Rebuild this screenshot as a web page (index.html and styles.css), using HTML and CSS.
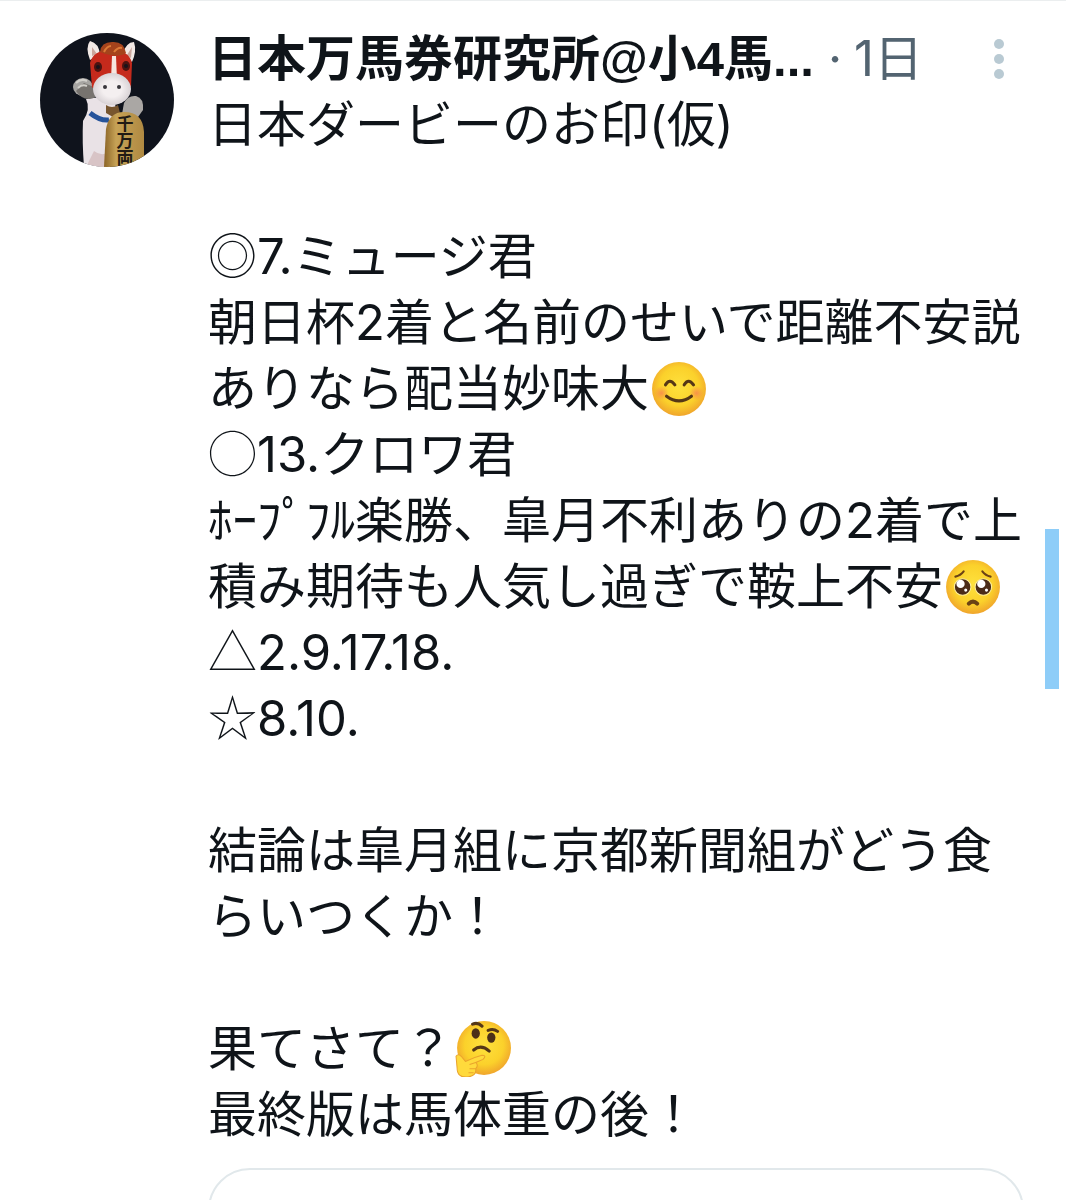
FILE: index.html
```
<!DOCTYPE html>
<html lang="ja">
<head>
<meta charset="UTF-8" />
<meta name="viewport" content="width=device-width, initial-scale=1" />
<title>日本万馬券研究所</title>
<link rel="stylesheet" href="styles.css">
</head>
<body>

<article class="tweet">
  <svg class="avatar" viewBox="0 0 134 134" role="img" aria-label="馬の置物">
    <defs>
      <clipPath id="round"><circle cx="67" cy="67" r="67" /></clipPath>
      <linearGradient id="koban" x1="0" x2="1"><stop offset="0" stop-color="#8b6426" /><stop offset=".3" stop-color="#c6a256" /><stop offset="1" stop-color="#b08a42" /></linearGradient>
      <radialGradient id="fur"><stop offset=".5" stop-color="#f4eff0" /><stop offset="1" stop-color="#d8d2d5" /></radialGradient>
    </defs>
    <g clip-path="url(#round)">
      <rect width="134" height="134" fill="#0f131c" />
      <path d="M48 66Q58 62 75 70L78 92 68 134H44Q42 108 43 88Q51 76 46 66Z" fill="#e9e2e6" />
      <path d="M54 118q6 5 14 2l2 14H46z" fill="#d8c4c6" />
      <ellipse cx="43" cy="54" rx="10" ry="9" fill="#a7a5a2" />
      <path d="M36 58Q44 70 56 64L54 54 44 50Z" fill="#77736f" />
      <path d="M36 50q5-5 11-2M38 55q4-4 9-2" stroke="#d2d0cb" stroke-width="2" fill="none" />
      <path d="M84 70q4-8 12-7 8 2 7 14l-5 7-16-3z" fill="#aaa7a4" />
      <path d="M50 80q10 8 19 7" stroke="#27549b" stroke-width="5" fill="none" />
      <path d="M50 27Q45 14 50 8Q59 10 60 22Z M82 22Q86 9 94 9Q97 18 92 29Z" fill="#f2e9e5" />
      <path d="M52 23 52 14 57 21Z M87 22 92 14 91 25Z" fill="#cba79d" />
      <path d="M50 30Q53 17 71 17Q89 17 92 30L91 54Q82 63 71 62Q56 61 52 54Z" fill="#c52a1c" />
      <path d="M60 19Q61 9 72 9Q84 8 86 20Q78 26 60 19Z" fill="#a5431c" />
      <path d="M64 19q3-6 7-6M74 19q4-5 8-4" stroke="#dc7a37" stroke-width="2" fill="none" />
      <path d="M72 23h4l1 24h-6z" fill="#f6e5df" />
      <ellipse cx="58" cy="34" rx="4" ry="5" fill="#4d1310" />
      <ellipse cx="86" cy="33" rx="4" ry="5" fill="#4d1310" />
      <circle cx="58" cy="34" r="2" fill="#17131a" />
      <circle cx="86" cy="33" r="2" fill="#17131a" />
      <ellipse cx="72" cy="56" rx="19" ry="16" fill="url(#fur)" />
      <circle cx="65" cy="54" r="2" fill="#38363c" />
      <circle cx="79" cy="54" r="2" fill="#38363c" />
      <path d="M66 72q6 4 12 0l2 8-7 4-7-4z" fill="#77552e" />
      <path d="M66 96Q69 79 84 79Q103 79 104 99V134H64Z" fill="url(#koban)" />
      <text class="avatar-text" x="85" y="82">千万両</text>
    </g>
  </svg>

  <div class="tweet-main">
    <header class="tweet-header">
      <span class="name">日本万馬券研究所@小4馬...</span>
      <span class="dot">·</span>
      <time class="time">1日</time>
      <button class="more" aria-label="その他">
        <svg viewBox="0 0 10 40"><circle cx="5" cy="5" r="5" /><circle cx="5" cy="20" r="5" /><circle cx="5" cy="35" r="5" /></svg>
      </button>
    </header>

    <div class="tweet-text">
      <p>日本ダービーのお印(仮)</p>
      <p>
        <span class="mark">◎</span>7.ミュージ君<br>
        朝日杯2着と名前のせいで距離不安説ありなら配当妙味大<svg class="emoji" viewBox="0 0 54 54" role="img" aria-label="笑顔">
          <defs>
            <radialGradient id="face" cx=".5" cy=".45" r=".55"><stop offset="0" stop-color="#fee13d" /><stop offset=".65" stop-color="#fbd12b" /><stop offset="1" stop-color="#f0a52c" /></radialGradient>
            <radialGradient id="blush"><stop offset="0" stop-color="#f78350" stop-opacity=".8" /><stop offset="1" stop-color="#f78350" stop-opacity="0" /></radialGradient>
          </defs>
          <circle cx="27" cy="27" r="26" fill="url(#face)" />
          <circle cx="10" cy="31" r="7" fill="url(#blush)" />
          <circle cx="44" cy="31" r="7" fill="url(#blush)" />
          <g fill="none" stroke="#553716" stroke-width="3" stroke-linecap="round">
            <path d="M14 23q4-7 9 0M32 23q4-7 9 0" />
            <path d="M15 34q12 9 24 0" />
          </g>
        </svg><br>
        <span class="mark">◯</span>13.クロワ君<br>
        ﾎｰﾌﾟﾌﾙ楽勝、皐月不利ありの2着で上積み期待も人気し過ぎで鞍上不安<svg class="emoji" viewBox="0 0 54 54" role="img" aria-label="うるうる">
          <circle cx="27" cy="27" r="26" fill="url(#face)" />
          <g fill="#4b2c18" stroke="#fff0a0">
            <circle cx="17" cy="27" r="8" />
            <circle cx="37" cy="27" r="8" />
          </g>
          <g fill="#fff">
            <circle cx="15" cy="24" r="4" /><circle cx="35" cy="24" r="4" />
            <circle cx="20" cy="30" r="1.5" /><circle cx="40" cy="30" r="1.5" />
          </g>
          <g fill="none" stroke="#6b4215" stroke-width="2" stroke-linecap="round">
            <path d="M10 17q5-1 8-5M44 17q-5-1-8-5" />
            <path d="M23 43q4-4 8 0" stroke-width="4" />
          </g>
        </svg><br>
        <span class="mark">△</span>2.9.17.18.<br>
        <span class="mark">☆</span>8.10.
      </p>
      <p>結論は皐月組に京都新聞組がどう食らいつくか！</p>
      <p>
        果てさて？<svg class="emoji" viewBox="0 0 54 54" role="img" aria-label="考える顔">
          <circle cx="28" cy="26" r="26" fill="url(#face)" />
          <g fill="#4b3018"><ellipse cx="20" cy="12" rx="4" ry="5" /><ellipse cx="35" cy="16" rx="4" ry="5" /></g>
          <g fill="none" stroke="#553716" stroke-width="3" stroke-linecap="round">
            <path d="M17 3q5-2 9 2M32 9q5-2 9 1" />
            <path d="M18 28q7-6 15 1" />
          </g>
          <path d="M1 34Q3 31 6 34L10 39Q18 35 26 33Q31 33 27 37L20 40Q23 43 20 46Q21 53 12 54Q2 55 2 45Z" fill="#ffda3c" stroke="#eaa42c" />
          <path d="M14 42l6-2M14 46l6 0M13 50l5 0" stroke="#eaa42c" fill="none" />
        </svg><br>
        最終版は馬体重の後！
      </p>
    </div>

    <div class="media-card"></div>
  </div>
</article>

<div class="scroll-thumb"></div>

</body>
</html>
```
FILE: styles.css
```
* {
  box-sizing: border-box;
}
body {
  margin: 0;
  background: #fff;
  color: #0f1419;
  font-family: Inter, "Noto Sans CJK JP", sans-serif;
  font-size: 49px;
  line-height: 66px;
}
.tweet {
  display: flex;
  gap: 34px;
  height: 100vh;
  overflow: hidden;
  padding: 25px 42px 0 40px;
  border-top: 1px solid #ebeeef;
}
.avatar {
  flex: none;
  width: 134px;
  height: 134px;
  margin-top: 7px;
}
.avatar-text {
  font-family: "Noto Sans CJK JP", sans-serif;
  font-size: 17px;
  font-weight: bold;
  fill: #211b14;
  writing-mode: vertical-rl;
}
.tweet-main {
  flex: 1;
  min-width: 0;
}
.tweet-header {
  display: flex;
  align-items: center;
  height: 66px;
  white-space: nowrap;
}
.name {
  font-family: "Liberation Sans", "Noto Sans CJK JP", sans-serif;
  font-weight: 600;
}
.dot {
  margin: 0 12px 0 14px;
  color: #536471;
}
.time {
  color: #536471;
}
.more {
  margin-left: auto;
  padding: 0 20px;
  border: none;
  background: none;
  cursor: pointer;
}
.more svg {
  display: block;
  width: 10px;
  height: 40px;
  fill: #b9cad3;
}
.tweet-text p {
  margin: 0 0 66px;
}
.tweet-text p:last-child {
  margin-bottom: 0;
}
.mark {
  font-family: "Noto Sans CJK JP", sans-serif;
  font-weight: 100;
  line-height: 1;
}
.emoji {
  width: 56px;
  height: 56px;
  margin: 0 2px;
  vertical-align: -11px;
}
.media-card {
  height: 90px;
  margin-top: 20px;
  border: 2px solid #e1e8eb;
  border-radius: 42px;
}
.scroll-thumb {
  position: absolute;
  top: 529px;
  right: 7px;
  width: 14px;
  height: 160px;
  background: #8ecdf8;
}
```
